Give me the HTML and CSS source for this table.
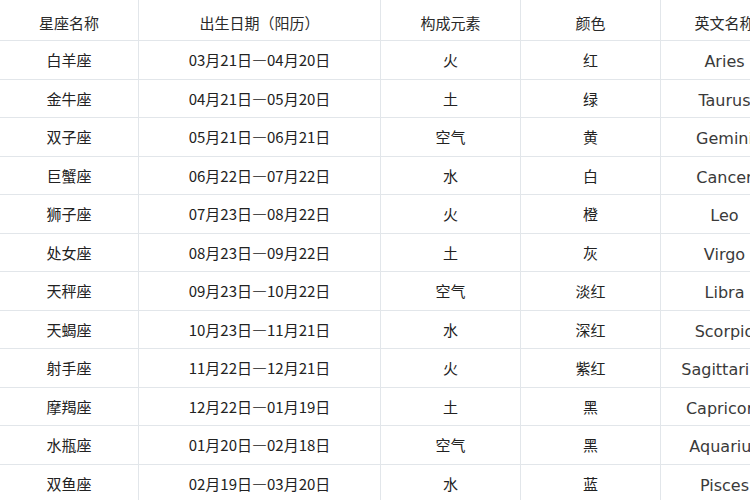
FILE: index.html
```html
<!DOCTYPE html>
<html lang="zh">
<head>
<meta charset="utf-8">
<title>星座表</title>
<link rel="stylesheet" href="styles.css">
</head>
<body>
<div class="viewport">
  <div class="table">
    <div class="cell head">星座名称</div><div class="cell head">出生日期（阳历）</div><div class="cell head">构成元素</div><div class="cell head">颜色</div><div class="cell head">英文名称</div>
    <div class="cell">白羊座</div><div class="cell">03月21日—04月20日</div><div class="cell">火</div><div class="cell">红</div><div class="cell en">Aries</div>
    <div class="cell">金牛座</div><div class="cell">04月21日—05月20日</div><div class="cell">土</div><div class="cell">绿</div><div class="cell en">Taurus</div>
    <div class="cell">双子座</div><div class="cell">05月21日—06月21日</div><div class="cell">空气</div><div class="cell">黄</div><div class="cell en">Gemini</div>
    <div class="cell">巨蟹座</div><div class="cell">06月22日—07月22日</div><div class="cell">水</div><div class="cell">白</div><div class="cell en">Cancer</div>
    <div class="cell">狮子座</div><div class="cell">07月23日—08月22日</div><div class="cell">火</div><div class="cell">橙</div><div class="cell en">Leo</div>
    <div class="cell">处女座</div><div class="cell">08月23日—09月22日</div><div class="cell">土</div><div class="cell">灰</div><div class="cell en">Virgo</div>
    <div class="cell">天秤座</div><div class="cell">09月23日—10月22日</div><div class="cell">空气</div><div class="cell">淡红</div><div class="cell en">Libra</div>
    <div class="cell">天蝎座</div><div class="cell">10月23日—11月21日</div><div class="cell">水</div><div class="cell">深红</div><div class="cell en">Scorpio</div>
    <div class="cell">射手座</div><div class="cell">11月22日—12月21日</div><div class="cell">火</div><div class="cell">紫红</div><div class="cell en">Sagittarius</div>
    <div class="cell">摩羯座</div><div class="cell">12月22日—01月19日</div><div class="cell">土</div><div class="cell">黑</div><div class="cell en">Capricorn</div>
    <div class="cell">水瓶座</div><div class="cell">01月20日—02月18日</div><div class="cell">空气</div><div class="cell">黑</div><div class="cell en">Aquarius</div>
    <div class="cell">双鱼座</div><div class="cell">02月19日—03月20日</div><div class="cell">水</div><div class="cell">蓝</div><div class="cell en">Pisces</div>
  </div>
</div>
</body>
</html>
```
FILE: styles.css
```css
html, body {
  margin: 0;
  padding: 0;
  background: #ffffff;
}
.viewport {
  width: 750px;
  height: 500px;
  overflow: hidden;
}
.table {
  display: grid;
  grid-template-columns: 139px 242px 140px 140px 128px;
  grid-template-rows: 41px;
  grid-auto-rows: 38.5px;
  width: 789px;
  font-family: "Noto Sans CJK SC", "Noto Sans", sans-serif;
  font-size: 15px;
  color: #222222;
}
.cell {
  display: flex;
  align-items: center;
  justify-content: center;
  border-right: 1px solid #e2e6ea;
  border-bottom: 1px solid #e2e6ea;
  white-space: nowrap;
  line-height: 1;
}
.head {
  padding-top: 4px;
  color: #2a2a2a;
}
.en {
  padding-top: 5px;
  font-family: "DejaVu Sans", "Noto Sans", sans-serif;
  font-size: 16px;
  color: #3a3a3a;
}
```
